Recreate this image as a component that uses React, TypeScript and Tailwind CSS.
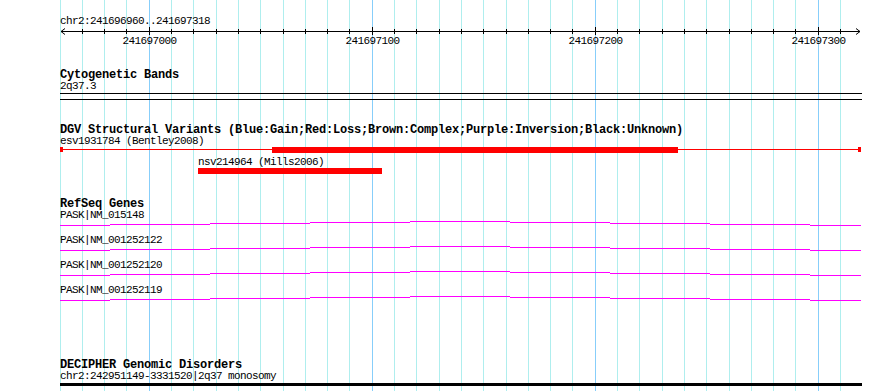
import React from 'react';

const START = 241696960;
const PX_PER_BP = 2.23;
const LEFT = 60;
const TRACK_W = 802;

// column of a base position on the page
const col = (bp: number) => Math.floor(LEFT + (bp - START) * PX_PER_BP);

const gridBps = Array.from({ length: 36 }, (_, i) => START + i * 10);
const majorBps = [241697000, 241697100, 241697200, 241697300];

const small = "font-['Liberation_Mono','DejaVu_Sans_Mono',monospace] text-[11px] tracking-[-0.6px] text-black whitespace-pre";
const bold = "font-['Liberation_Mono','DejaVu_Sans_Mono',monospace] font-bold text-[12px] leading-[12px] tracking-[-0.2px] text-black whitespace-pre";

// intron connector seen from inside: slight hat, one pixel per 100px
const hatSteps: [number, number, number][] = [
  [0, 50, 4], [50, 150, 3], [150, 250, 2], [250, 350, 1], [350, 450, 0],
  [450, 550, 1], [550, 650, 2], [650, 750, 3], [750, 801, 4],
];

function Grid() {
  return (
    <svg className="absolute inset-0 pointer-events-none" width={890} height={391} shapeRendering="crispEdges">
      {gridBps.map((bp) => {
        const x = col(bp) + 0.5;
        const major = bp % 100 === 0;
        return <line key={bp} x1={x} x2={x} y1={0} y2={391} stroke={major ? '#87cefa' : '#afeeee'} strokeWidth={1} />;
      })}
    </svg>
  );
}

function Ruler() {
  return (
    <div className="relative h-[22px]">
      <svg className="absolute left-0 top-0" width={TRACK_W} height={10} shapeRendering="crispEdges">
        <line x1={1} x2={800} y1={4.5} y2={4.5} stroke="#000" />
        <polyline points="5,1.5 1,4.5 5,7.5" fill="none" stroke="#000" shapeRendering="auto" />
        <polyline points="796,1.5 800,4.5 796,7.5" fill="none" stroke="#000" shapeRendering="auto" />
        {gridBps.slice(1).map((bp) => {
          const x = col(bp) - LEFT + 0.5;
          const major = bp % 100 === 0;
          return <line key={bp} x1={x} x2={x} y1={major ? 0 : 2} y2={major ? 8 : 7} stroke="#000" />;
        })}
      </svg>
      {majorBps.map((bp) => (
        <span
          key={bp}
          className={`${small} leading-[11px] absolute top-[9px] -translate-x-1/2`}
          style={{ left: col(bp) - LEFT + 0.5 }}
        >
          {bp}
        </span>
      ))}
    </div>
  );
}

function GeneRow({ label }: { label: string }) {
  return (
    <div className="mb-[9px]">
      <div className={`${small} leading-[10px]`}>{label}</div>
      <svg width={TRACK_W} height={6} shapeRendering="crispEdges" className="block">
        {hatSteps.map(([a, b, dy]) => (
          <line key={a} x1={a} x2={b} y1={1.5 + dy} y2={1.5 + dy} stroke="#ff00ff" />
        ))}
      </svg>
    </div>
  );
}

export default function App() {
  const genes = ['PASK|NM_015148', 'PASK|NM_001252122', 'PASK|NM_001252120', 'PASK|NM_001252119'];

  return (
    <div className="relative w-[890px] h-[391px] overflow-hidden bg-white">
      <Grid />

      <div className="relative ml-[60px] w-[802px] pt-[16px]">
        <div className={`${small} leading-[11px]`}>chr2:241696960..241697318</div>
        <Ruler />

        {/* Cytogenetic Bands */}
        <div className={`${bold} mt-[20px]`}>Cytogenetic Bands</div>
        <div className={`${small} leading-[11px]`}>2q37.3</div>
        <div className="h-[9px] flex flex-col justify-between py-[1px]">
          <div className="h-px bg-black" />
          <div className="h-px bg-black" />
        </div>

        {/* DGV */}
        <div className={`${bold} mt-[23px]`}>
          DGV Structural Variants (Blue:Gain;Red:Loss;Brown:Complex;Purple:Inversion;Black:Unknown)
        </div>
        <div className={`${small} leading-[11px]`}>esv1931784 (Bentley2008)</div>
        <svg width={TRACK_W} height={6} shapeRendering="crispEdges" className="block">
          <rect x={0} y={2} width={801} height={1} fill="#ff0000" />
          <rect x={0} y={0} width={3} height={5} fill="#ff0000" />
          <rect x={798} y={0} width={3} height={5} fill="#ff0000" />
          <rect x={212} y={0} width={406} height={6} fill="#ff0000" />
        </svg>
        <div className={`${small} leading-[11px] mt-[4px] ml-[138px]`}>nsv214964 (Mills2006)</div>
        <div className="ml-[138px] w-[184px] h-[6px] bg-[#ff0000]" />

        {/* RefSeq */}
        <div className={`${bold} mt-[24px]`}>RefSeq Genes</div>
        {genes.map((g) => (
          <GeneRow key={g} label={g} />
        ))}

        {/* DECIPHER */}
        <div className={`${bold} mt-[58px]`}>DECIPHER Genomic Disorders</div>
        <div className={`${small} leading-[11px]`}>chr2:242951149-3331520|2q37 monosomy</div>
        <div className="mt-[1px] h-[3px] bg-black" />
      </div>
    </div>
  );
}
